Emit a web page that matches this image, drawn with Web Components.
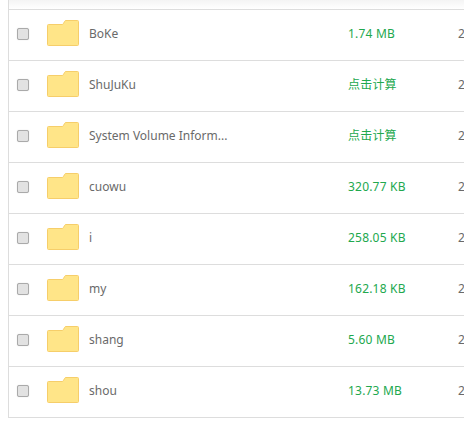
<!DOCTYPE html>
<html><head><meta charset="utf-8"><style>
html,body{margin:0;padding:0;background:#fff;overflow:hidden}
body{height:426px;font-family:"Noto Sans","Noto Sans CJK SC",sans-serif}
</style></head><body>
<file-table>
<file-row name="BoKe" size="1.74 MB"></file-row>
<file-row name="ShuJuKu" size="点击计算"></file-row>
<file-row name="System Volume Inform..." size="点击计算"></file-row>
<file-row name="cuowu" size="320.77 KB"></file-row>
<file-row name="i" size="258.05 KB"></file-row>
<file-row name="my" size="162.18 KB"></file-row>
<file-row name="shang" size="5.60 MB"></file-row>
<file-row name="shou" size="13.73 MB"></file-row>
</file-table>
<script>
class FileTable extends HTMLElement{constructor(){super();this.attachShadow({mode:'open'}).innerHTML=`<style>
:host{display:block;width:500px;margin-left:8px;padding-top:9px;box-sizing:border-box;height:418px;border-left:1px solid #ddd;border-bottom:1px solid #ddd}
.fade{height:9px;margin-top:-9px;background:linear-gradient(#f4f4f4,#fff)}
.list{border-top:1px solid #ddd}
</style><div class="fade"></div><div class="list"><slot></slot></div>`}}
class FileRow extends HTMLElement{constructor(){super();const n=this.getAttribute('name'),s=this.getAttribute('size');this.attachShadow({mode:'open'}).innerHTML=`<style>
:host{display:flex;align-items:center;box-sizing:content-box;height:46px;padding-bottom:4px;border-bottom:1px solid #ddd;font-size:12px;color:#6a6a6a}
:host(:last-child){border-bottom:0}
.cb{width:10px;height:10px;margin:2px 0 0 8px;border:1px solid #aaa;border-radius:2px;background:#e2e2e2;box-shadow:0 0 1px #ccc;flex:none}
svg{margin-left:18px;flex:none}
.name{margin-left:10px;width:259px;flex:none;white-space:nowrap}
.size{width:110px;flex:none;color:#22a84e;letter-spacing:.2px}
.date{flex:none}
</style><span class="cb"></span><svg width="32" height="26" viewBox="0 0 32 26"><path d="M.5 5.500Q.5 4.500 1.500 4.500H15Q16 4.500 16.500 3.500L17.500 1.500Q18 .5 19 .5H30.500Q31.500 .5 31.500 1.500V24.500Q31.500 25.500 30.500 25.500H1.500Q.5 25.500 .5 24.500Z" fill="#ffe588" stroke="#f6ce6a"/></svg><span class="name">${n}</span><span class="size">${s}</span><span class="date">2</span>`}}
customElements.define('file-table',FileTable);customElements.define('file-row',FileRow);
</script></body></html>
